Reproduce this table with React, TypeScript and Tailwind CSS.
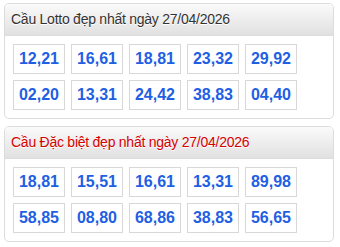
const lotto = [
  ["12,21", "16,61", "18,81", "23,32", "29,92"],
  ["02,20", "13,31", "24,42", "38,83", "04,40"],
];

const dacBiet = [
  ["18,81", "15,51", "16,61", "13,31", "89,98"],
  ["58,85", "08,80", "68,86", "38,83", "56,65"],
];

type CardProps = {
  title: string;
  red?: boolean;
  rows: string[][];
};

function Card({ title, red, rows }: CardProps) {
  return (
    <div className="w-[330px] overflow-hidden rounded-[5px] border border-[#dcdcdc] bg-white">
      <div
        className={`flex h-[32px] items-center border-b border-[#dcdcdc] bg-gradient-to-b from-[#fafafa] to-[#e1e1e1] px-[6px] text-[14px] tracking-[-0.25px] [text-shadow:0_1px_0_#fff] ${
          red ? "text-[#d40000]" : "text-[#333]"
        }`}
      >
        {title}
      </div>
      <div className="flex flex-col gap-[6px] px-[8px] py-[8px]">
        {rows.map((row, i) => (
          <div key={i} className="flex gap-[6px]">
            {row.map((n) => (
              <div
                key={n}
                className="flex h-[30px] w-[52px] items-center justify-center border border-[#d8d8d8] bg-white text-[16px] font-bold text-[#1f5fe3]"
              >
                {n}
              </div>
            ))}
          </div>
        ))}
      </div>
    </div>
  );
}

export default function App() {
  return (
    <div
      className="flex h-[247px] w-[340px] flex-col gap-[7px] bg-white pl-[4px] pt-[3px]"
      style={{ fontFamily: '"Liberation Sans", Arial, sans-serif' }}
    >
      <Card title="Cầu Lotto đẹp nhất ngày 27/04/2026" rows={lotto} />
      <Card title="Cầu Đặc biệt đẹp nhất ngày 27/04/2026" red rows={dacBiet} />
    </div>
  );
}
